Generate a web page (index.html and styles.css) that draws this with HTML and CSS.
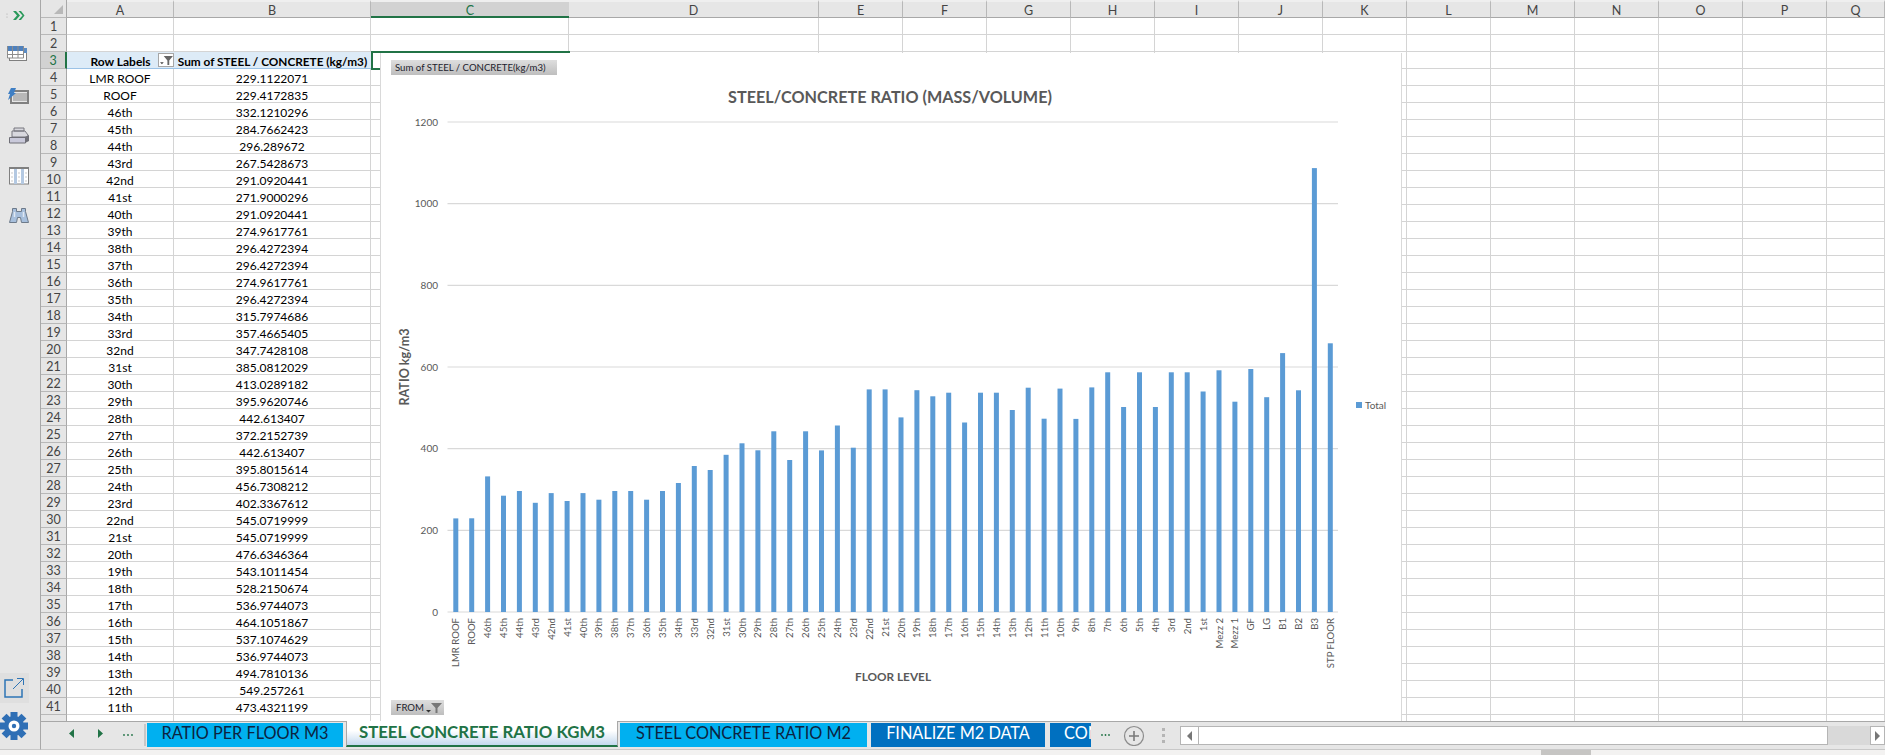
FILE: index.html
```html
<!DOCTYPE html>
<html lang="en">
  <head>
    <meta charset="UTF-8" />
    <title>STEEL CONCRETE RATIO KGM3</title>
    <link rel="stylesheet" href="styles.css">
  </head>
  <body>
    <div class="window">
      <div class="main">
        <!-- add-in panel on the left -->
        <div class="sidebar">
          <svg class="side-icons" width="40" height="749" viewBox="0 0 40 749">
            <circle cx="7" cy="14" r="0.6" fill="#aaa" />
            <circle cx="7" cy="17" r="0.6" fill="#aaa" />
            <path d="M13 11l4 4.500-4 4.500h3l4-4.500-4-4.500zM18.500 11l4 4.500-4 4.500h2.500l3.500-4.500-3.500-4.500z" fill="#2b9a5c" />

            <rect x="9.500" y="48.500" width="17" height="12" fill="#fff" stroke="#7f7f7f" />
            <rect x="24" y="48" width="3" height="5" fill="#5b8cc4" />
            <rect x="7" y="46" width="17" height="12" fill="#fff" stroke="none" />
            <rect x="7" y="46" width="17" height="5" fill="#4f81bd" />
            <path d="M7.500 46v12h16v-12M7 54.500h17M12.500 46v12M18 46v12" fill="none" stroke="#8c8c8c" />

            <rect x="11" y="91" width="17" height="12" fill="#e6e6e6" stroke="#808080" stroke-width="2" />
            <rect x="13" y="93" width="14" height="8" fill="#b8b8b8" />
            <path d="M11 88h5l-2 5h2l-8 7 2-6h-2z" fill="#3f7fc4" />

            <path d="M14 128h10v3h-10zM12 131h13l3 4v2h-16z" fill="#d8d8de" stroke="#77777f" />
            <path d="M9.500 137.500h16v5.500h-16z" fill="#c9c9da" stroke="#6f6f77" />
            <path d="M25 137l4-2v6l-4 2z" fill="#6f6f77" />

            <rect x="9.500" y="168" width="19" height="16" fill="#fff" stroke="#808080" />
            <rect x="9" y="167" width="20" height="2" fill="#808080" />
            <rect x="14" y="169" width="3" height="15" fill="#b4c9e2" />
            <rect x="21" y="169" width="3" height="15" fill="#b4c9e2" />
            <path d="M11 173h2M11 177h2M11 181h2M18 173h2M18 177h2M18 181h2M25 173h2M25 177h2M25 181h2" stroke="#c9c9c9" />

            <path d="M12.500 208.500h4v3h5v-3h4v3l3 11h-7l-1-5h-3l-1 5h-7l3-11z" fill="#a7bfdc" stroke="#6d7a8a" />
            <path d="M14.500 212v5M23.500 212v5" stroke="#dfe8f2" stroke-width="1.500" />

            <rect class="side-hover" x="0" y="673" width="29" height="30" />
            <path d="M13 680h-8v17h17v-8" fill="none" stroke="#2e75b6" stroke-width="1.500" />
            <path d="M13 689l10-10M17 678.500h6.500v6.500" fill="none" stroke="#2e75b6" />

            <g fill="#2f6fb5">
              <circle cx="14" cy="726" r="10" />
              <rect x="10.500" y="712" width="7" height="28" />
              <rect x="10.500" y="712" width="7" height="28" transform="rotate(45 14 726)" />
              <rect x="10.500" y="712" width="7" height="28" transform="rotate(90 14 726)" />
              <rect x="10.500" y="712" width="7" height="28" transform="rotate(135 14 726)" />
            </g>
            <circle cx="14" cy="726" r="5.500" fill="#fff" />
            <circle cx="14" cy="726" r="2.200" fill="#2f6fb5" />
          </svg>
        </div>

        <div class="workbook">
          <div class="sheet">
            <div class="col-heads">
              <div class="rh corner"><span class="corner-mark"></span></div>
              <div class="ch col-a">A</div>
              <div class="ch col-b">B</div>
              <div class="ch col-c active">C</div>
              <div class="ch col-d">D</div>
              <div class="ch col-n">E</div>
              <div class="ch col-n">F</div>
              <div class="ch col-n">G</div>
              <div class="ch col-n">H</div>
              <div class="ch col-n">I</div>
              <div class="ch col-n">J</div>
              <div class="ch col-n">K</div>
              <div class="ch col-n">L</div>
              <div class="ch col-n">M</div>
              <div class="ch col-n">N</div>
              <div class="ch col-n">O</div>
              <div class="ch col-n">P</div>
              <div class="ch col-last">Q</div>
            </div>

            <div class="row"><div class="rh">1</div><div class="cell col-a"></div><div class="cell col-b"></div><div class="cell col-c"></div><div class="cell col-d"></div><div class="rest"></div></div>
            <div class="row"><div class="rh">2</div><div class="cell col-a"></div><div class="cell col-b"></div><div class="cell col-c"></div><div class="cell col-d"></div><div class="rest"></div></div>
            <div class="row row-head">
              <div class="rh active">3</div>
              <div class="cell col-a">Row Labels<span class="filter-btn"><svg width="14" height="12" viewBox="0 0 14 12"><path d="M4 1h10l-4 5v5h-2v-5z" fill="#666" /><path d="M0 8h4l-2 2z" fill="#444" /></svg></span></div>
              <div class="cell col-b">Sum of STEEL / CONCRETE (kg/m3)</div>
              <div class="cell col-c"></div><div class="cell col-d"></div><div class="rest"></div>
            </div>
            <div class="row"><div class="rh">4</div><div class="cell col-a">LMR ROOF</div><div class="cell col-b">229.1122071</div><div class="cell col-c"></div><div class="cell col-d"></div><div class="rest"></div></div>
            <div class="row"><div class="rh">5</div><div class="cell col-a">ROOF</div><div class="cell col-b">229.4172835</div><div class="cell col-c"></div><div class="cell col-d"></div><div class="rest"></div></div>
            <div class="row"><div class="rh">6</div><div class="cell col-a">46th</div><div class="cell col-b">332.1210296</div><div class="cell col-c"></div><div class="cell col-d"></div><div class="rest"></div></div>
            <div class="row"><div class="rh">7</div><div class="cell col-a">45th</div><div class="cell col-b">284.7662423</div><div class="cell col-c"></div><div class="cell col-d"></div><div class="rest"></div></div>
            <div class="row"><div class="rh">8</div><div class="cell col-a">44th</div><div class="cell col-b">296.289672</div><div class="cell col-c"></div><div class="cell col-d"></div><div class="rest"></div></div>
            <div class="row"><div class="rh">9</div><div class="cell col-a">43rd</div><div class="cell col-b">267.5428673</div><div class="cell col-c"></div><div class="cell col-d"></div><div class="rest"></div></div>
            <div class="row"><div class="rh">10</div><div class="cell col-a">42nd</div><div class="cell col-b">291.0920441</div><div class="cell col-c"></div><div class="cell col-d"></div><div class="rest"></div></div>
            <div class="row"><div class="rh">11</div><div class="cell col-a">41st</div><div class="cell col-b">271.9000296</div><div class="cell col-c"></div><div class="cell col-d"></div><div class="rest"></div></div>
            <div class="row"><div class="rh">12</div><div class="cell col-a">40th</div><div class="cell col-b">291.0920441</div><div class="cell col-c"></div><div class="cell col-d"></div><div class="rest"></div></div>
            <div class="row"><div class="rh">13</div><div class="cell col-a">39th</div><div class="cell col-b">274.9617761</div><div class="cell col-c"></div><div class="cell col-d"></div><div class="rest"></div></div>
            <div class="row"><div class="rh">14</div><div class="cell col-a">38th</div><div class="cell col-b">296.4272394</div><div class="cell col-c"></div><div class="cell col-d"></div><div class="rest"></div></div>
            <div class="row"><div class="rh">15</div><div class="cell col-a">37th</div><div class="cell col-b">296.4272394</div><div class="cell col-c"></div><div class="cell col-d"></div><div class="rest"></div></div>
            <div class="row"><div class="rh">16</div><div class="cell col-a">36th</div><div class="cell col-b">274.9617761</div><div class="cell col-c"></div><div class="cell col-d"></div><div class="rest"></div></div>
            <div class="row"><div class="rh">17</div><div class="cell col-a">35th</div><div class="cell col-b">296.4272394</div><div class="cell col-c"></div><div class="cell col-d"></div><div class="rest"></div></div>
            <div class="row"><div class="rh">18</div><div class="cell col-a">34th</div><div class="cell col-b">315.7974686</div><div class="cell col-c"></div><div class="cell col-d"></div><div class="rest"></div></div>
            <div class="row"><div class="rh">19</div><div class="cell col-a">33rd</div><div class="cell col-b">357.4665405</div><div class="cell col-c"></div><div class="cell col-d"></div><div class="rest"></div></div>
            <div class="row"><div class="rh">20</div><div class="cell col-a">32nd</div><div class="cell col-b">347.7428108</div><div class="cell col-c"></div><div class="cell col-d"></div><div class="rest"></div></div>
            <div class="row"><div class="rh">21</div><div class="cell col-a">31st</div><div class="cell col-b">385.0812029</div><div class="cell col-c"></div><div class="cell col-d"></div><div class="rest"></div></div>
            <div class="row"><div class="rh">22</div><div class="cell col-a">30th</div><div class="cell col-b">413.0289182</div><div class="cell col-c"></div><div class="cell col-d"></div><div class="rest"></div></div>
            <div class="row"><div class="rh">23</div><div class="cell col-a">29th</div><div class="cell col-b">395.9620746</div><div class="cell col-c"></div><div class="cell col-d"></div><div class="rest"></div></div>
            <div class="row"><div class="rh">24</div><div class="cell col-a">28th</div><div class="cell col-b">442.613407</div><div class="cell col-c"></div><div class="cell col-d"></div><div class="rest"></div></div>
            <div class="row"><div class="rh">25</div><div class="cell col-a">27th</div><div class="cell col-b">372.2152739</div><div class="cell col-c"></div><div class="cell col-d"></div><div class="rest"></div></div>
            <div class="row"><div class="rh">26</div><div class="cell col-a">26th</div><div class="cell col-b">442.613407</div><div class="cell col-c"></div><div class="cell col-d"></div><div class="rest"></div></div>
            <div class="row"><div class="rh">27</div><div class="cell col-a">25th</div><div class="cell col-b">395.8015614</div><div class="cell col-c"></div><div class="cell col-d"></div><div class="rest"></div></div>
            <div class="row"><div class="rh">28</div><div class="cell col-a">24th</div><div class="cell col-b">456.7308212</div><div class="cell col-c"></div><div class="cell col-d"></div><div class="rest"></div></div>
            <div class="row"><div class="rh">29</div><div class="cell col-a">23rd</div><div class="cell col-b">402.3367612</div><div class="cell col-c"></div><div class="cell col-d"></div><div class="rest"></div></div>
            <div class="row"><div class="rh">30</div><div class="cell col-a">22nd</div><div class="cell col-b">545.0719999</div><div class="cell col-c"></div><div class="cell col-d"></div><div class="rest"></div></div>
            <div class="row"><div class="rh">31</div><div class="cell col-a">21st</div><div class="cell col-b">545.0719999</div><div class="cell col-c"></div><div class="cell col-d"></div><div class="rest"></div></div>
            <div class="row"><div class="rh">32</div><div class="cell col-a">20th</div><div class="cell col-b">476.6346364</div><div class="cell col-c"></div><div class="cell col-d"></div><div class="rest"></div></div>
            <div class="row"><div class="rh">33</div><div class="cell col-a">19th</div><div class="cell col-b">543.1011454</div><div class="cell col-c"></div><div class="cell col-d"></div><div class="rest"></div></div>
            <div class="row"><div class="rh">34</div><div class="cell col-a">18th</div><div class="cell col-b">528.2150674</div><div class="cell col-c"></div><div class="cell col-d"></div><div class="rest"></div></div>
            <div class="row"><div class="rh">35</div><div class="cell col-a">17th</div><div class="cell col-b">536.9744073</div><div class="cell col-c"></div><div class="cell col-d"></div><div class="rest"></div></div>
            <div class="row"><div class="rh">36</div><div class="cell col-a">16th</div><div class="cell col-b">464.1051867</div><div class="cell col-c"></div><div class="cell col-d"></div><div class="rest"></div></div>
            <div class="row"><div class="rh">37</div><div class="cell col-a">15th</div><div class="cell col-b">537.1074629</div><div class="cell col-c"></div><div class="cell col-d"></div><div class="rest"></div></div>
            <div class="row"><div class="rh">38</div><div class="cell col-a">14th</div><div class="cell col-b">536.9744073</div><div class="cell col-c"></div><div class="cell col-d"></div><div class="rest"></div></div>
            <div class="row"><div class="rh">39</div><div class="cell col-a">13th</div><div class="cell col-b">494.7810136</div><div class="cell col-c"></div><div class="cell col-d"></div><div class="rest"></div></div>
            <div class="row"><div class="rh">40</div><div class="cell col-a">12th</div><div class="cell col-b">549.257261</div><div class="cell col-c"></div><div class="cell col-d"></div><div class="rest"></div></div>
            <div class="row"><div class="rh">41</div><div class="cell col-a">11th</div><div class="cell col-b">473.4321199</div><div class="cell col-c"></div><div class="cell col-d"></div><div class="rest"></div></div>
            <div class="row"><div class="rh"></div><div class="cell col-a"></div><div class="cell col-b"></div><div class="cell col-c"></div><div class="cell col-d"></div><div class="rest"></div></div>

            <div class="cell-cursor"></div>

            <!-- pivot chart floating over the sheet, coordinates are the window's -->
            <div class="chart">
              <svg width="1020" height="668" viewBox="381 53 1020 668">
                <g class="grid">
                  <path d="M447.500 122H1338M447.500 203.700H1338M447.500 285.300H1338M447.500 367H1338M447.500 448.700H1338M447.500 530.300H1338M447.500 612H1338" />
                </g>
                <g class="ticks">
                  <text x="438" y="125.500">1200</text>
                  <text x="438" y="207.200">1000</text>
                  <text x="438" y="288.800">800</text>
                  <text x="438" y="370.500">600</text>
                  <text x="438" y="452.200">400</text>
                  <text x="438" y="533.800">200</text>
                  <text x="438" y="615.500">0</text>
                </g>
                <g class="bars">
                  <rect x="453.300" y="518.400" width="5" height="93.600" />
                  <rect x="469.200" y="518.300" width="5" height="93.700" />
                  <rect x="485.100" y="476.400" width="5" height="135.600" />
                  <rect x="501" y="495.700" width="5" height="116.300" />
                  <rect x="516.900" y="491" width="5" height="121" />
                  <rect x="532.800" y="502.800" width="5" height="109.200" />
                  <rect x="548.700" y="493.100" width="5" height="118.900" />
                  <rect x="564.600" y="501" width="5" height="111" />
                  <rect x="580.500" y="493.100" width="5" height="118.900" />
                  <rect x="596.400" y="499.700" width="5" height="112.300" />
                  <rect x="612.300" y="491" width="5" height="121" />
                  <rect x="628.200" y="491" width="5" height="121" />
                  <rect x="644.100" y="499.700" width="5" height="112.300" />
                  <rect x="660" y="491" width="5" height="121" />
                  <rect x="675.900" y="483" width="5" height="129" />
                  <rect x="691.800" y="466" width="5" height="146" />
                  <rect x="707.700" y="470" width="5" height="142" />
                  <rect x="723.600" y="454.800" width="5" height="157.200" />
                  <rect x="739.500" y="443.300" width="5" height="168.700" />
                  <rect x="755.400" y="450.300" width="5" height="161.700" />
                  <rect x="771.300" y="431.300" width="5" height="180.700" />
                  <rect x="787.200" y="460" width="5" height="152" />
                  <rect x="803.100" y="431.300" width="5" height="180.700" />
                  <rect x="819" y="450.400" width="5" height="161.600" />
                  <rect x="834.900" y="425.500" width="5" height="186.500" />
                  <rect x="850.800" y="447.700" width="5" height="164.300" />
                  <rect x="866.700" y="389.400" width="5" height="222.600" />
                  <rect x="882.600" y="389.400" width="5" height="222.600" />
                  <rect x="898.500" y="417.400" width="5" height="194.600" />
                  <rect x="914.400" y="390.200" width="5" height="221.800" />
                  <rect x="930.300" y="396.300" width="5" height="215.700" />
                  <rect x="946.200" y="392.700" width="5" height="219.300" />
                  <rect x="962.100" y="422.500" width="5" height="189.500" />
                  <rect x="978" y="392.700" width="5" height="219.300" />
                  <rect x="993.900" y="392.700" width="5" height="219.300" />
                  <rect x="1009.800" y="410" width="5" height="202" />
                  <rect x="1025.700" y="387.700" width="5" height="224.300" />
                  <rect x="1041.600" y="418.700" width="5" height="193.300" />
                  <rect x="1057.500" y="388.600" width="5" height="223.400" />
                  <rect x="1073.400" y="418.900" width="5" height="193.100" />
                  <rect x="1089.300" y="387.400" width="5" height="224.600" />
                  <rect x="1105.200" y="372.300" width="5" height="239.700" />
                  <rect x="1121.100" y="407" width="5" height="205" />
                  <rect x="1137" y="372.300" width="5" height="239.700" />
                  <rect x="1152.900" y="407" width="5" height="205" />
                  <rect x="1168.800" y="372.300" width="5" height="239.700" />
                  <rect x="1184.700" y="372.300" width="5" height="239.700" />
                  <rect x="1200.600" y="391.500" width="5" height="220.500" />
                  <rect x="1216.500" y="370.300" width="5" height="241.700" />
                  <rect x="1232.400" y="401.700" width="5" height="210.300" />
                  <rect x="1248.300" y="369" width="5" height="243" />
                  <rect x="1264.200" y="397.200" width="5" height="214.800" />
                  <rect x="1280.100" y="353.100" width="5" height="258.900" />
                  <rect x="1296" y="390.300" width="5" height="221.700" />
                  <rect x="1311.900" y="168.100" width="5" height="443.900" />
                  <rect x="1327.800" y="343.300" width="5" height="268.700" />
                </g>
                <g class="cats">
                  <text transform="translate(459.300 618) rotate(-90)">LMR ROOF</text>
                  <text transform="translate(475.200 618) rotate(-90)">ROOF</text>
                  <text transform="translate(491.100 618) rotate(-90)">46th</text>
                  <text transform="translate(507 618) rotate(-90)">45th</text>
                  <text transform="translate(522.900 618) rotate(-90)">44th</text>
                  <text transform="translate(538.800 618) rotate(-90)">43rd</text>
                  <text transform="translate(554.700 618) rotate(-90)">42nd</text>
                  <text transform="translate(570.600 618) rotate(-90)">41st</text>
                  <text transform="translate(586.500 618) rotate(-90)">40th</text>
                  <text transform="translate(602.400 618) rotate(-90)">39th</text>
                  <text transform="translate(618.300 618) rotate(-90)">38th</text>
                  <text transform="translate(634.200 618) rotate(-90)">37th</text>
                  <text transform="translate(650.100 618) rotate(-90)">36th</text>
                  <text transform="translate(666 618) rotate(-90)">35th</text>
                  <text transform="translate(681.900 618) rotate(-90)">34th</text>
                  <text transform="translate(697.800 618) rotate(-90)">33rd</text>
                  <text transform="translate(713.700 618) rotate(-90)">32nd</text>
                  <text transform="translate(729.600 618) rotate(-90)">31st</text>
                  <text transform="translate(745.500 618) rotate(-90)">30th</text>
                  <text transform="translate(761.400 618) rotate(-90)">29th</text>
                  <text transform="translate(777.300 618) rotate(-90)">28th</text>
                  <text transform="translate(793.200 618) rotate(-90)">27th</text>
                  <text transform="translate(809.100 618) rotate(-90)">26th</text>
                  <text transform="translate(825 618) rotate(-90)">25th</text>
                  <text transform="translate(840.900 618) rotate(-90)">24th</text>
                  <text transform="translate(856.800 618) rotate(-90)">23rd</text>
                  <text transform="translate(872.700 618) rotate(-90)">22nd</text>
                  <text transform="translate(888.600 618) rotate(-90)">21st</text>
                  <text transform="translate(904.500 618) rotate(-90)">20th</text>
                  <text transform="translate(920.400 618) rotate(-90)">19th</text>
                  <text transform="translate(936.300 618) rotate(-90)">18th</text>
                  <text transform="translate(952.200 618) rotate(-90)">17th</text>
                  <text transform="translate(968.100 618) rotate(-90)">16th</text>
                  <text transform="translate(984 618) rotate(-90)">15th</text>
                  <text transform="translate(999.900 618) rotate(-90)">14th</text>
                  <text transform="translate(1015.800 618) rotate(-90)">13th</text>
                  <text transform="translate(1031.700 618) rotate(-90)">12th</text>
                  <text transform="translate(1047.600 618) rotate(-90)">11th</text>
                  <text transform="translate(1063.500 618) rotate(-90)">10th</text>
                  <text transform="translate(1079.400 618) rotate(-90)">9th</text>
                  <text transform="translate(1095.300 618) rotate(-90)">8th</text>
                  <text transform="translate(1111.200 618) rotate(-90)">7th</text>
                  <text transform="translate(1127.100 618) rotate(-90)">6th</text>
                  <text transform="translate(1143 618) rotate(-90)">5th</text>
                  <text transform="translate(1158.900 618) rotate(-90)">4th</text>
                  <text transform="translate(1174.800 618) rotate(-90)">3rd</text>
                  <text transform="translate(1190.700 618) rotate(-90)">2nd</text>
                  <text transform="translate(1206.600 618) rotate(-90)">1st</text>
                  <text transform="translate(1222.500 618) rotate(-90)">Mezz 2</text>
                  <text transform="translate(1238.400 618) rotate(-90)">Mezz 1</text>
                  <text transform="translate(1254.300 618) rotate(-90)">GF</text>
                  <text transform="translate(1270.200 618) rotate(-90)">LG</text>
                  <text transform="translate(1286.100 618) rotate(-90)">B1</text>
                  <text transform="translate(1302 618) rotate(-90)">B2</text>
                  <text transform="translate(1317.900 618) rotate(-90)">B3</text>
                  <text transform="translate(1333.800 618) rotate(-90)">STP FLOOR</text>
                </g>
                <text class="chart-title" x="890" y="103">STEEL/CONCRETE RATIO (MASS/VOLUME)</text>
                <text class="axis-title" transform="translate(409 367) rotate(-90)">RATIO kg/m3</text>
                <text class="axis-title axis-x" x="893" y="681">FLOOR LEVEL</text>
                <rect x="1356" y="402" width="6" height="6" fill="#5b9bd5" />
                <text class="legend" x="1365" y="409">Total</text>
              </svg>
              <div class="field-btn field-sum">Sum of STEEL / CONCRETE(kg/m3)</div>
              <div class="field-btn field-from">FROM<svg width="17" height="12" viewBox="0 0 17 12"><path d="M6 1h11l-4.500 5v5h-2v-5z" fill="#777" /><path d="M1 8h5l-2.500 2.500z" fill="#333" /></svg></div>
            </div>
          </div>

          <div class="tabbar">
            <div class="tab-nav">
              <svg width="106" height="24" viewBox="0 0 106 24">
                <path d="M33 7v9l-5-4.500zM57 7v9l5-4.500z" fill="#217346" />
                <circle cx="83" cy="13" r="0.900" fill="#217346" />
                <circle cx="87" cy="13" r="0.900" fill="#217346" />
                <circle cx="91" cy="13" r="0.900" fill="#217346" />
                <path d="M104 2v22" stroke="#a8a8a8" />
              </svg>
            </div>
            <div class="tab tab-cyan tab-ratio">RATIO PER FLOOR M3</div>
            <div class="tab tab-current">STEEL CONCRETE RATIO KGM3</div>
            <div class="tab tab-cyan tab-m2">STEEL CONCRETE RATIO M2</div>
            <div class="tab tab-blue tab-final">FINALIZE M2 DATA</div>
            <div class="tab tab-blue tab-cut">CONCRETE</div>
            <div class="tab-more">
              <svg width="89" height="24" viewBox="0 0 89 24">
                <circle cx="11" cy="13" r="0.900" fill="#217346" />
                <circle cx="14.500" cy="13" r="0.900" fill="#217346" />
                <circle cx="18" cy="13" r="0.900" fill="#217346" />
                <circle cx="43" cy="14" r="9.500" fill="none" stroke="#8c8c8c" stroke-width="1.200" />
                <path d="M43 9v10M38 14h10" stroke="#7a7a7a" stroke-width="1.600" />
                <path d="M71 6h3v3h-3zM71 12h3v3h-3zM71 18h3v3h-3z" fill="#b5b5b5" />
              </svg>
            </div>
            <div class="hscroll">
              <div class="scroll-btn"><span class="arrow-left"></span></div>
              <div class="scroll-thumb"></div>
              <div class="scroll-gutter"></div>
              <div class="scroll-btn scroll-end"><span class="arrow-right"></span></div>
            </div>
          </div>
        </div>
      </div>
      <div class="statusbar"><span class="status-tick"></span></div>
    </div>
  </body>
</html>
```

FILE: styles.css
```css
html,
body {
  margin: 0;
  padding: 0;
  height: 755px;
  overflow: hidden;
  background-color: #fff;
  font-family: "Lato", "Liberation Sans", sans-serif;
}

.window {
  width: 1885px;
  height: 755px;
  display: flex;
  flex-direction: column;
  overflow: hidden;
}

.main {
  display: flex;
  height: 750px;
}

.sidebar {
  width: 40px;
  height: 749px;
  flex: none;
  background-color: #e6e6e6;
  border-right: 1px solid #a8a8a8;
  border-bottom: 1px solid #c8c8c8;
}

.side-icons {
  display: block;
}

.side-hover {
  fill: #dfdfdf;
}

.workbook {
  flex: 1;
  display: flex;
  flex-direction: column;
  min-width: 0;
}

/* sheet */
.sheet {
  position: relative;
  height: 721px;
  flex: none;
  overflow: hidden;
  font-size: 12px;
  color: #000;
}

.col-heads {
  display: flex;
  height: 18px;
  background-color: #e6e6e6;
}

.row {
  display: flex;
  height: 17px;
}

.rh {
  width: 26px;
  flex: none;
  box-sizing: border-box;
  background-color: #e6e6e6;
  border-right: 1px solid #a8a8a8;
  border-bottom: 1px solid #b8b8b8;
  color: #444;
  font-size: 12.500px;
  line-height: 18px;
  text-align: center;
}

.rh.active {
  background-color: #d2d2d2;
  color: #217346;
  border-right: 2px solid #217346;
}

.corner {
  position: relative;
}

.corner-mark {
  position: absolute;
  right: 3px;
  bottom: 3px;
  width: 0;
  height: 0;
  border-left: 9px solid transparent;
  border-bottom: 9px solid #b8b8b8;
}

.col-a {
  width: 107px;
  flex: none;
}

.col-b {
  width: 197px;
  flex: none;
}

.col-c {
  width: 198px;
  flex: none;
}

.col-d {
  width: 250px;
  flex: none;
}

.col-n {
  width: 84px;
  flex: none;
}

.col-last {
  flex: 1;
}

.ch {
  box-sizing: border-box;
  border-top: 2px solid #efefef;
  border-right: 1px solid #b8b8b8;
  border-bottom: 1px solid #a8a8a8;
  color: #444;
  font-size: 12.500px;
  line-height: 17px;
  text-align: center;
}

.ch.active {
  background-color: #d2d2d2;
  color: #217346;
  border-bottom: 2px solid #217346;
  border-right: 0;
}

.cell {
  box-sizing: border-box;
  border-right: 1px solid #d4d4d4;
  border-bottom: 1px solid #d4d4d4;
  line-height: 19px;
  text-align: center;
  white-space: nowrap;
}

.rest {
  flex: 1;
  box-sizing: border-box;
  border-bottom: 1px solid #d4d4d4;
  border-right: 1px solid #d4d4d4;
  background-image: repeating-linear-gradient(90deg, transparent 0 83px, #d4d4d4 83px 84px);
}

.row-head .col-a,
.row-head .col-b {
  background-color: #ddebf7;
  border-right: 0;
  border-bottom: 1px solid #9bc2e6;
  font-weight: 700;
}

.row-head .col-b {
  font-size: 11.800px;
}

.row-head .col-a {
  position: relative;
}

.filter-btn {
  position: absolute;
  top: 1px;
  right: 0;
  width: 16px;
  height: 14px;
  box-sizing: border-box;
  background-color: #fff;
  border: 1px solid #a6a6a6;
  display: flex;
  align-items: center;
  justify-content: center;
}

.filter-btn svg {
  width: 13px;
  height: 11px;
}

.cell-cursor {
  position: absolute;
  left: 330px;
  top: 51px;
  width: 199px;
  height: 19px;
  box-sizing: border-box;
  border: 2px solid #217346;
}

/* chart */
.chart {
  position: absolute;
  left: 340px;
  top: 53px;
  width: 1020px;
  height: 668px;
  background-color: #fff;
  box-shadow: -1px 0 0 #d9d9d9, 1px 0 0 #d9d9d9;
}

.chart svg {
  display: block;
}

.grid path {
  fill: none;
  stroke: #d9d9d9;
  stroke-width: 1.200;
}

.ticks text {
  font-size: 10px;
  fill: #595959;
  text-anchor: end;
}

.bars rect {
  fill: #5b9bd5;
}

.cats text {
  font-size: 9.600px;
  fill: #595959;
  text-anchor: end;
}

.chart-title {
  font-size: 16.200px;
  font-weight: 700;
  fill: #595959;
  text-anchor: middle;
}

.axis-title {
  font-size: 12.600px;
  font-weight: 700;
  fill: #595959;
  text-anchor: middle;
}

.axis-x {
  font-size: 11.800px;
}

.legend {
  font-size: 10px;
  fill: #595959;
}

.field-btn {
  position: absolute;
  height: 15px;
  box-sizing: border-box;
  background-image: linear-gradient(#dedede, #bebebe);
  color: #1c1c2c;
  font-size: 9.600px;
  line-height: 15px;
  white-space: nowrap;
}

.field-sum {
  left: 10px;
  top: 7px;
  width: 166px;
  padding-left: 4px;
}

.field-from {
  left: 10px;
  top: 647px;
  width: 53px;
  padding-left: 5px;
  display: flex;
  align-items: center;
  gap: 1px;
}

/* sheet tabs */
.tabbar {
  height: 29px;
  flex: none;
  display: flex;
  box-sizing: border-box;
  background-color: #e6e6e6;
  border-top: 1px solid #a8a8a8;
  border-bottom: 1px solid #c8c8c8;
}

.tab-nav {
  width: 106px;
  flex: none;
}

.tab {
  height: 24px;
  margin-top: 1px;
  flex: none;
  box-sizing: border-box;
  font-size: 16.300px;
  line-height: 19px;
  text-align: center;
  white-space: nowrap;
  overflow: hidden;
}

.tab-cyan {
  background-color: #00b0f0;
  color: #0c2340;
}

.tab-blue {
  background-color: #0070c0;
  color: #fff;
}

.tab-ratio {
  width: 196px;
  margin-right: 3px;
}

.tab-current {
  width: 272px;
  height: 26px;
  margin-top: -1px;
  margin-right: 2px;
  background-image: linear-gradient(#fff 40%, #c4d9ee);
  border-left: 1px solid #a8a8a8;
  border-right: 1px solid #a8a8a8;
  border-bottom: 2px solid #217346;
  color: #217346;
  font-size: 16.800px;
  font-weight: 700;
  line-height: 22px;
}

.tab-m2 {
  width: 247px;
  margin-right: 4px;
}

.tab-final {
  width: 174px;
  margin-right: 5px;
}

.tab-cut {
  width: 41px;
  padding-left: 14px;
  text-align: left;
}

.tab-more {
  width: 89px;
  flex: none;
}

.hscroll {
  width: 705px;
  height: 19px;
  margin-top: 4px;
  flex: none;
  display: flex;
}

.scroll-btn {
  width: 19px;
  flex: none;
  box-sizing: border-box;
  background-color: #fff;
  border: 1px solid #b5b5b5;
  display: flex;
  align-items: center;
  justify-content: center;
}

.scroll-end {
  width: 15px;
}

.arrow-left {
  width: 0;
  height: 0;
  border-top: 5px solid transparent;
  border-bottom: 5px solid transparent;
  border-right: 5px solid #777;
}

.arrow-right {
  width: 0;
  height: 0;
  border-top: 5px solid transparent;
  border-bottom: 5px solid transparent;
  border-left: 5px solid #777;
}

.scroll-thumb {
  width: 629px;
  flex: none;
  box-sizing: border-box;
  background-color: #fff;
  border: 1px solid #b5b5b5;
  border-left: 0;
}

.scroll-gutter {
  flex: 1;
  background-color: #d9d9d9;
}

.statusbar {
  height: 5px;
  flex: none;
  display: flex;
  background-color: #f3f2f1;
  padding-left: 1541px;
}

.status-tick {
  width: 50px;
  background-color: #c6c5c3;
}
```
